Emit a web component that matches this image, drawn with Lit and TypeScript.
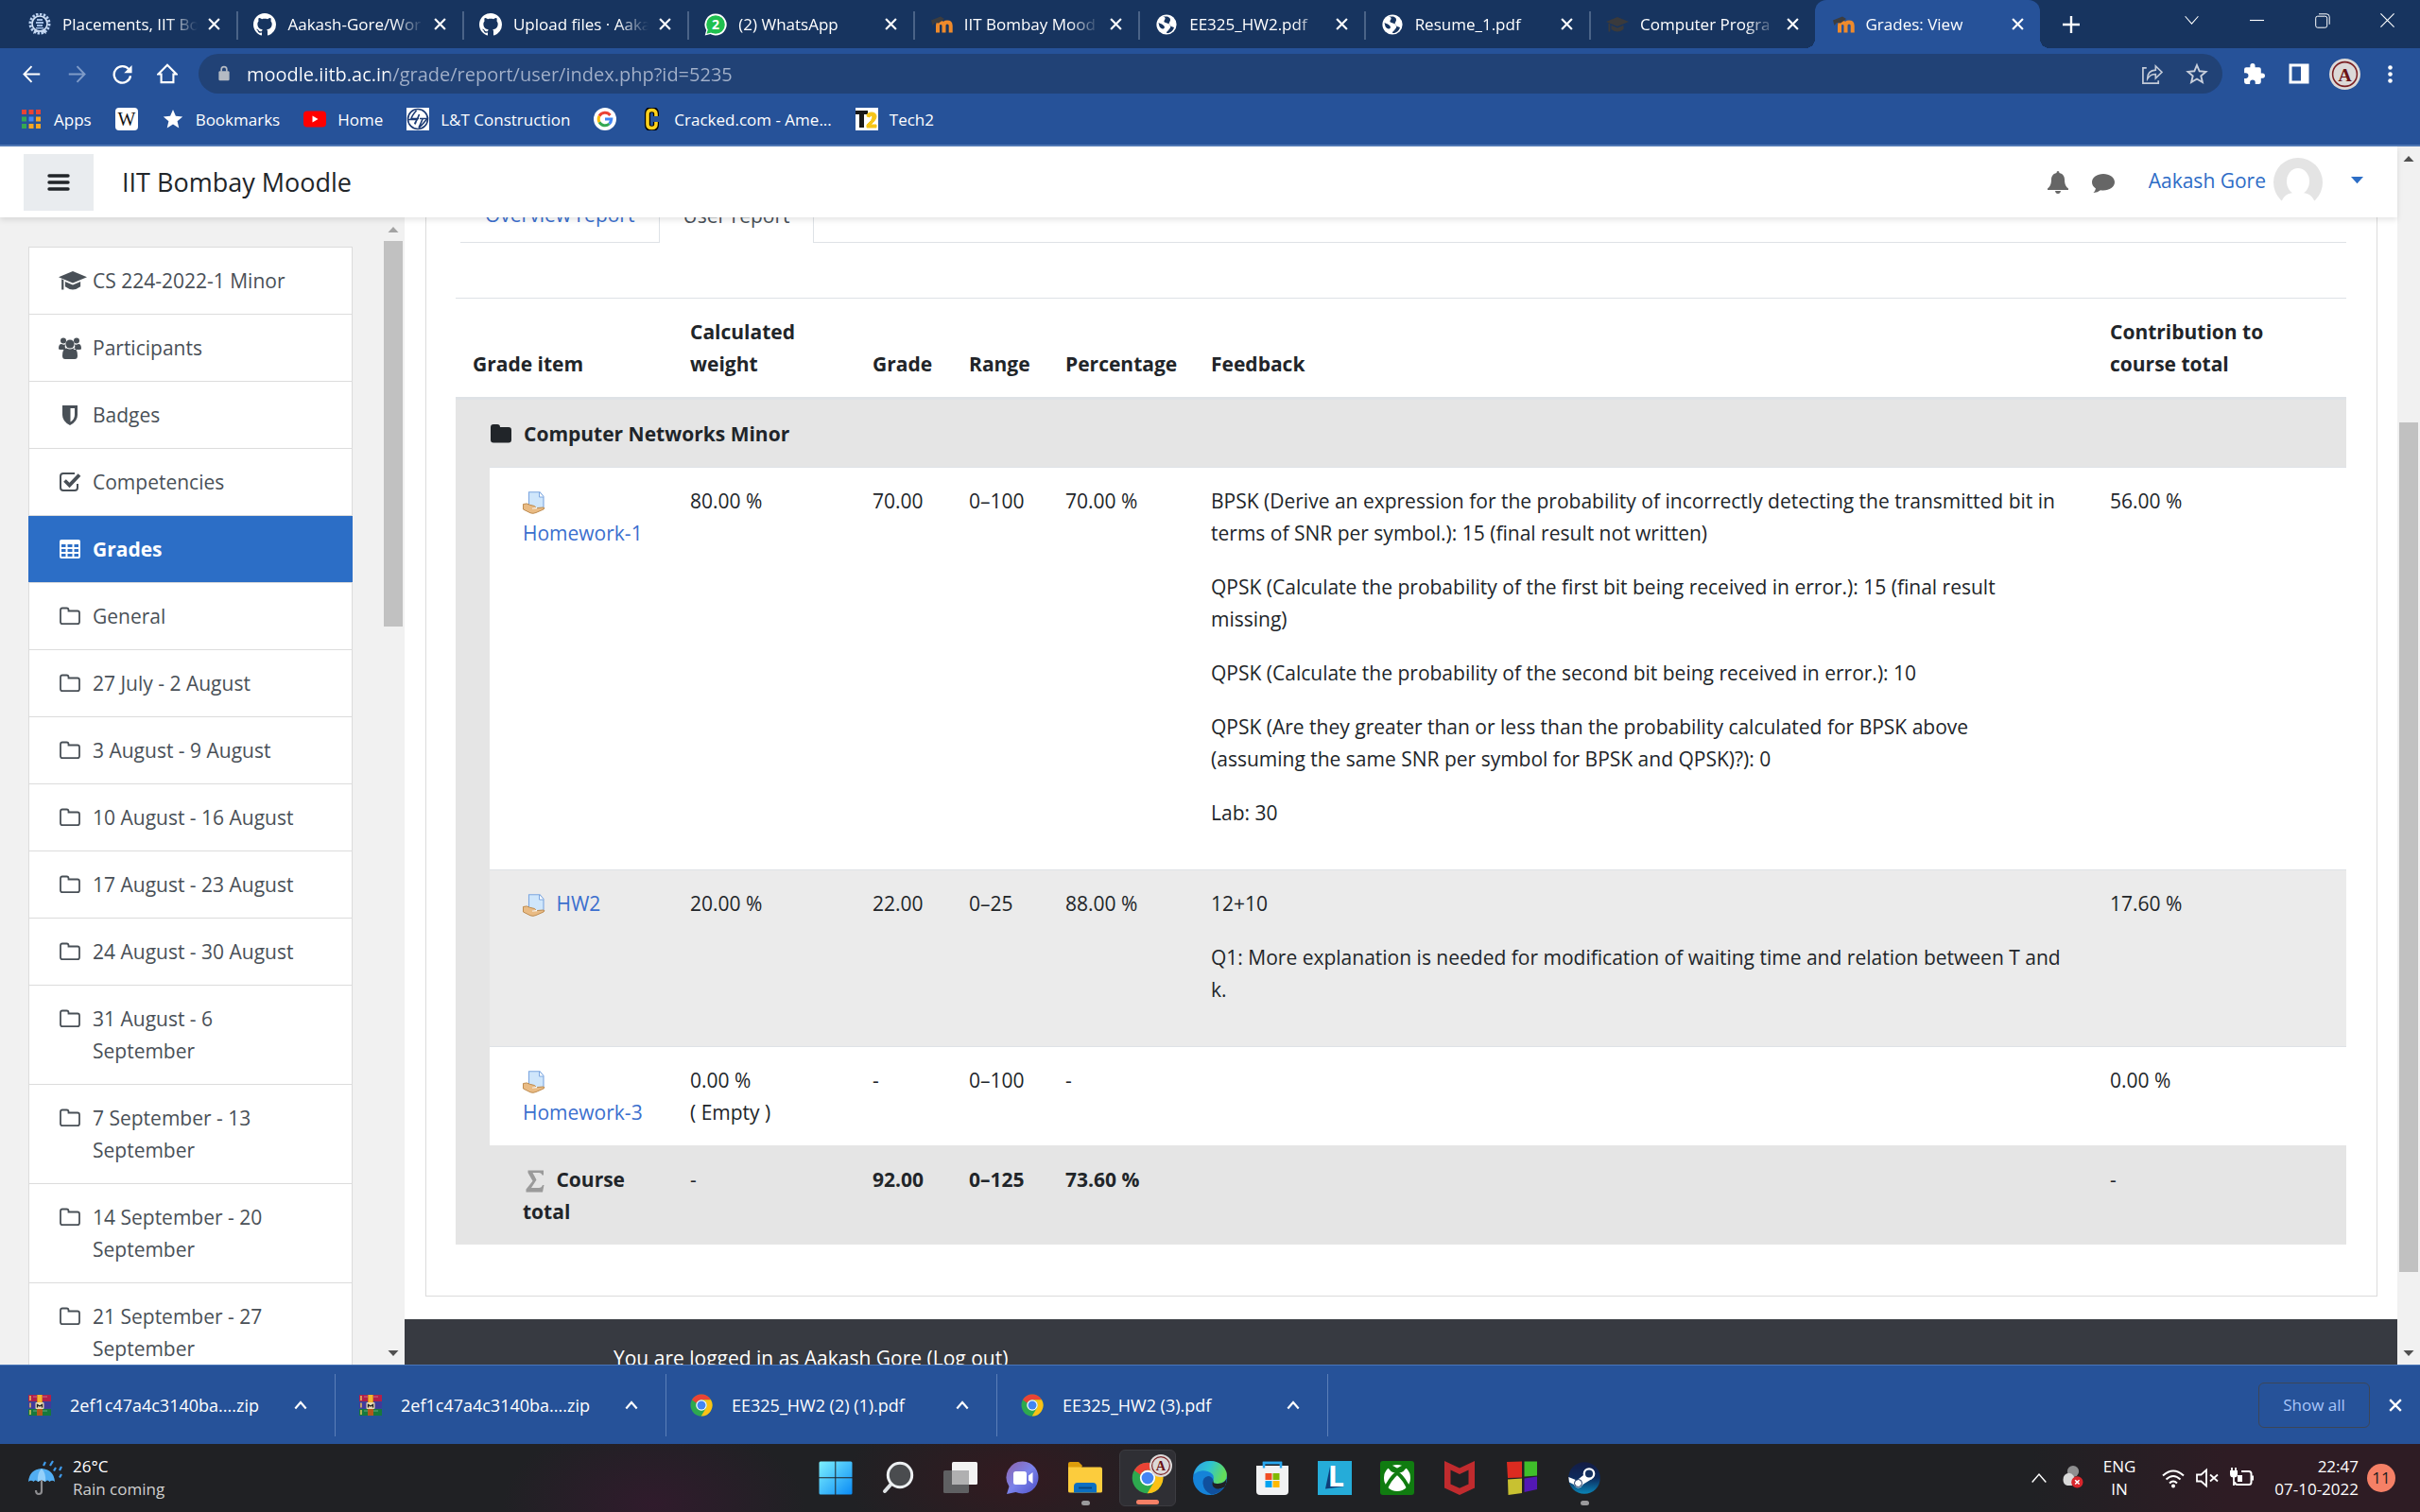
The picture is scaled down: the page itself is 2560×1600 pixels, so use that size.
import { LitElement, html, css, svg, nothing, TemplateResult } from "lit";
import { customElement, property } from "lit/decorators.js";
import { classMap } from "lit/directives/class-map.js";
import { styleMap } from "lit/directives/style-map.js";

type Icon = TemplateResult;

const icon = (box: string, body: unknown, size = 24): Icon =>
  html`<svg viewBox=${box} width=${size} height=${size} aria-hidden="true">${body}</svg>`;

/* ---------- browser icons ---------- */

const closeIcon = (size = 13, w = 2) =>
  icon("0 0 12 12", svg`<path d="M1 1L11 11M11 1L1 11" stroke="currentColor" stroke-width=${w} fill="none"/>`, size);

const seal = icon(
  "0 0 24 24",
  svg`<circle cx="12" cy="11" r="10" fill="none" stroke="#b9d0f0" stroke-width="3" stroke-dasharray="2.4 1.5"/>
  <circle cx="12" cy="11" r="8" fill="none" stroke="#d5e4f8" stroke-width="1.6"/>
  <path d="M9 6h6v2H9zM8 9h8v2H8zM9 12h6v2H9zM8 15h8v1.500H8z" fill="#9fbbe2"/>
  <path d="M5 22q7-5 14 0l-1.500-4h-11z" fill="#c8daf3"/>`
);
const github = icon(
  "0 0 16 16",
  svg`<path fill="#fff" d="M8 0C3.58 0 0 3.58 0 8c0 3.54 2.29 6.53 5.47 7.59.4.07.55-.17.55-.38 0-.19-.01-.82-.01-1.49-2.01.37-2.53-.49-2.69-.94-.09-.23-.48-.94-.82-1.13-.28-.15-.68-.52-.01-.53.63-.01 1.08.58 1.23.82.72 1.21 1.87.87 2.33.66.07-.52.28-.87.51-1.07-1.78-.2-3.64-.89-3.64-3.95 0-.87.31-1.59.82-2.15-.08-.2-.36-1.02.08-2.12 0 0 .67-.21 2.2.82.64-.18 1.32-.27 2-.27s1.36.09 2 .27c1.53-1.04 2.2-.82 2.2-.82.44 1.1.16 1.92.08 2.12.51.56.82 1.27.82 2.15 0 3.07-1.87 3.75-3.65 3.95.29.25.54.73.54 1.48 0 1.07-.01 1.93-.01 2.2 0 .21.15.46.55.38A8.01 8.01 0 0 0 16 8c0-4.42-3.58-8-8-8z"/>`
);
const whatsapp = icon(
  "0 0 24 24",
  svg`<path d="M12 .5A11.500 11.500 0 1 1 6.500 22L.7 23.500 2.200 18A11.500 11.500 0 0 1 12 .5z" fill="#fff"/>
  <circle cx="12" cy="12" r="9.800" fill="#1fc04f"/><path d="M2.500 21.800l1.500-5 3.400 3.600z" fill="#1fc04f"/>
  <text x="12" y="17" font-size="14" font-weight="700" text-anchor="middle" fill="#fff">2</text>`
);
const moodleM = icon(
  "0 0 24 24",
  svg`<path d="M8 20.500V13q0-3 3-3t3.500 3v7.500M14.500 20.500V13q0-3.500 3.500-3.500t3.700 3.500v7.500" fill="none" stroke="#ef8a2b" stroke-width="4"/>
  <path d="M1 7.500L11 3.500l4 2.500-6 4.500-4-.5-2.500 3z" fill="#3d3d3f"/>`
);
const globe = icon(
  "0 0 24 24",
  svg`<circle cx="12" cy="12" r="10.600" fill="#fff"/>
  <path d="M8 3.500c3 .5 3 2 2 3.500s-1 2.500 1 3 4 1 5 3-1 3.500-2 5-2 1-2 3c3 .5 7-2 8-6-2-1-4-1-5-3s1-3 1-5-1-2.500-3-3.500zM3.500 10c2 1 4 1.500 5.500 3s1 3-.5 3.500-3-1-4-2.500z" fill="#17345f"/>`
);
const gradCap = (color: string, size = 24) =>
  icon(
    "0 0 24 24",
    svg`<path d="M12 4L0 9l12 5 12-5z" fill=${color}/><path d="M5.500 12.800V17q6.500 5 13 0v-4.200L12 15.600z" fill=${color}/><path d="M2.500 10.500v9h1.800v-8.200z" fill=${color}/>`,
    size
  );
const back = icon("0 0 24 24", svg`<path d="M22 12H3M12 2.500L2.800 12l9.200 9.500" fill="none" stroke="#fff" stroke-width="2.200"/>`, 21);
const forward = icon("0 0 24 24", svg`<path d="M2 12h19M12 2.500l9.200 9.500-9.200 9.500" fill="none" stroke="#7f9bc8" stroke-width="2.200"/>`, 21);
const reload = icon("0 0 24 24", svg`<path d="M20 6.500A10 10 0 1 0 21.800 14" fill="none" stroke="#fff" stroke-width="2.600"/><path d="M23.500 1v9.500H14z" fill="#fff"/>`, 21);
const home = icon("0 0 24 24", svg`<path d="M1.500 12.500L12 2l10.500 10.500H19V22H5v-9.500z" fill="none" stroke="#fff" stroke-width="2.300"/>`, 22);
const lock = icon("0 0 24 32", svg`<rect x="2" y="11" width="20" height="18" rx="2.500" fill="#b4bac3"/><path d="M7 12V8a5 5 0 0 1 10 0v4" fill="none" stroke="#b4bac3" stroke-width="3"/>`, 18);
const share = icon(
  "0 0 24 24",
  svg`<path d="M6 5H2v17h17v-3" fill="none" stroke="#c3cbd8" stroke-width="1.800"/><path d="M7 17q0-9 9-9.500V3l7 6.800-7 6.700V12Q10 12 7 17z" fill="none" stroke="#c3cbd8" stroke-width="1.700"/>`,
  23
);
const starOutline = icon("0 0 24 24", svg`<path d="M12 3l2.700 6.300 6.800.6-5.200 4.500 1.600 6.700L12 17.500l-5.900 3.600 1.600-6.700L2.500 9.900l6.800-.6z" fill="none" stroke="#c9d0dc" stroke-width="1.900"/>`, 24);
const puzzle = icon(
  "0 0 24 24",
  svg`<path d="M20.500 11H19V7a2 2 0 0 0-2-2h-4V3.500a2.500 2.500 0 0 0-5 0V5H4a2 2 0 0 0-2 2v3.800h1.500a2.700 2.700 0 0 1 0 5.400H2V20a2 2 0 0 0 2 2h3.800v-1.500a2.700 2.700 0 0 1 5.400 0V22H17a2 2 0 0 0 2-2v-4h1.500a2.500 2.500 0 0 0 0-5z" fill="#fff"/>`,
  25
);
const sidePanel = icon("0 0 24 24", svg`<rect x="3" y="3" width="18" height="18" fill="none" stroke="#fff" stroke-width="3"/><path d="M14 3h7v18h-7z" fill="#fff"/>`, 24);
const profile = (size: number) =>
  icon(
    "0 0 32 32",
    svg`<circle cx="16" cy="16" r="16" fill="#dcd9d8"/><circle cx="16" cy="16" r="12.500" fill="none" stroke="#7a1f22" stroke-width="1.500"/>
    <text x="16" y="23" font-size="19" font-weight="700" font-family="Liberation Serif, serif" text-anchor="middle" fill="#6b1216">A</text>`,
    size
  );
const dots = icon("0 0 24 24", svg`<circle cx="12" cy="4" r="2.600" fill="#fff"/><circle cx="12" cy="12" r="2.600" fill="#fff"/><circle cx="12" cy="20" r="2.600" fill="#fff"/>`, 21);
const chevron = (dir: "up" | "down", size: number, w = 2) =>
  icon("0 0 16 16", svg`<path d=${dir === "up" ? "M1.500 12L8 4.500 14.500 12" : "M1.500 4L8 11.500 14.500 4"} fill="none" stroke="currentColor" stroke-width=${w}/>`, size);

const gridColors = ["#ea4335", "#ea4335", "#ea4335", "#34a853", "#4285f4", "#f5a623", "#34a853", "#f5a623", "#f5a623"];
const appsGrid = icon("0 0 24 24", gridColors.map((c, i) => svg`<rect x=${2 + (i % 3) * 7.5} y=${2 + Math.floor(i / 3) * 7.5} width="5" height="5" fill=${c}/>`));
const wiki = icon("0 0 24 24", svg`<rect width="24" height="24" rx="4" fill="#fff"/><text x="12" y="18.500" font-size="20" font-family="Liberation Serif, serif" text-anchor="middle" fill="#111">W</text>`);
const starSolid = icon("0 0 24 24", svg`<path d="M12 2l2.900 6.800 7.300.6-5.600 4.800 1.700 7.200L12 17.600l-6.300 3.800 1.700-7.200L1.800 9.400l7.300-.6z" fill="#fff"/>`);
const youtube = icon("0 0 24 24", svg`<rect y="3.500" width="24" height="17" rx="4" fill="#f00"/><path d="M9.500 8.500v7l6-3.500z" fill="#fff"/>`);
const lnt = icon(
  "0 0 24 24",
  svg`<rect width="24" height="24" fill="#fff"/><circle cx="12" cy="12" r="10.500" fill="none" stroke="#1d3b74" stroke-width="1.600"/>
  <path d="M10.500 3Q6 8 5 11.500h8M2 12.500h9l-2 5M13.500 7q-2 6-5 10M14 11.500h8q-4 5-9 10M17 12q-2 5-4 9" fill="none" stroke="#1d3b74" stroke-width="1.600"/>`
);
const google = icon(
  "0 0 24 24",
  svg`<circle cx="12" cy="12" r="12" fill="#fff"/>
  <path d="M17.500 8A6.800 6.800 0 0 0 6 8.800" fill="none" stroke="#ea4335" stroke-width="3"/>
  <path d="M6 8.800a6.800 6.800 0 0 0 0 6.500" fill="none" stroke="#fbbc05" stroke-width="3"/>
  <path d="M6 15.300a6.800 6.800 0 0 0 10.500 1.700" fill="none" stroke="#34a853" stroke-width="3"/>
  <path d="M12 12h6.800q-.3 3.300-2.300 5" fill="none" stroke="#4285f4" stroke-width="3"/>`
);
const cracked = icon(
  "0 0 24 24",
  svg`<path d="M17 9V6.500Q17 2 12.500 2T8 6.500v11Q8 22 12.500 22T17 17.500V15" fill="none" stroke="#000" stroke-width="6"/>
  <path d="M17 9V6.500Q17 2.500 12.500 2.500T8 6.500v11q0 4 4.500 4t4.500-4V15" fill="none" stroke="#ffd21c" stroke-width="3.600"/>`
);
const tech2 = icon(
  "0 0 24 24",
  svg`<rect width="24" height="24" fill="#fff"/><path d="M0 3h13v4H9v14H4V7H0z" fill="#191919"/>
  <path d="M12 9q0-4 5-4t5 4.500q0 3-6 8.500h6v3H12v-3q6-5 6-8 0-1.500-1.500-1.500T15 10z" fill="#f5c518" stroke="#f5c518"/>`
);

/* ---------- site icons ---------- */

const bars = icon("0 0 24 24", svg`<path d="M2 5h20M2 12h20M2 19h20" stroke="#212529" stroke-width="3.400" stroke-linecap="round"/>`);
const bell = icon("0 0 24 24", svg`<path d="M12 0q1.500 0 1.500 2c4 1 5.500 4 5.500 7 0 5 1.500 7.500 4 9.500v1.500H1v-1.500c2.500-2 4-4.500 4-9.500 0-3 1.500-6 5.500-7Q10.500 0 12 0zM9 21h6q-.5 3-3 3t-3-3z" fill="#666"/>`);
const comment = icon("0 0 24 24", svg`<path d="M12 3c6.500 0 12 3.800 12 8.800s-5.500 8.700-12 8.700q-1.500 0-3-.3-3 2.600-7.500 2.800 2-2 2.500-4.500-4-2.700-4-6.700C0 6.800 5.500 3 12 3z" fill="#666"/>`);
const avatar = icon(
  "0 0 52 52",
  svg`<circle cx="26" cy="26" r="26" fill="#e4e4e4"/><ellipse cx="26" cy="25" rx="12" ry="14" fill="#fff"/><path d="M7 52q2-14 14-15h10q12 1 14 15z" fill="#fff"/>`,
  52
);
const caret = icon("0 0 12 12", svg`<path d="M0 1h12L6 7.500z" fill="#2c6ec6"/>`, 13);
const users = icon(
  "0 0 24 24",
  svg`<g fill="#495057"><circle cx="5" cy="4.500" r="3"/><circle cx="19" cy="4.500" r="3"/><circle cx="12" cy="8" r="4.600"/>
  <path d="M0 13q0-5 3-5 2 1 4 .5-1 4 1.500 5.500H2q-2 0-2-1zM24 13q0-5-3-5-2 1-4 .5 1 4-1.500 5.500H22q2 0 2-1zM4 20.500q0-8 4.500-8 3.500 2 7 0 4.500 0 4.500 8 0 3.500-3 3.500H7q-3 0-3-3.500z"/></g>`
);
const shield = icon("0 0 24 24", svg`<path d="M4 2h16v10q0 7-8 11-8-4-8-11zM12.500 5v14.500q4.500-3 4.500-7.500V5z" fill="#495057" fill-rule="evenodd"/>`);
const checkSquare = icon("0 0 24 24", svg`<path d="M17 3H5a3 3 0 0 0-3 3v12a3 3 0 0 0 3 3h12a3 3 0 0 0 3-3v-4" fill="none" stroke="#495057" stroke-width="2"/><path d="M6.500 10.500L11.500 15.500 22 4.500" fill="none" stroke="#495057" stroke-width="3.800"/>`);
const tableIcon = icon("0 0 24 24", svg`<path fill-rule="evenodd" fill="#fff" d="M3 2h18q2 0 2 2v16q0 2-2 2H3q-2 0-2-2V4q0-2 2-2zM3 7v3h4.500V7zM9.500 7v3h5V7zM16.500 7v3H21V7zM3 12v3h4.500v-3zM9.500 12v3h5v-3zM16.500 12v3H21v-3zM3 17v3h4.500v-3zM9.500 17v3h5v-3zM16.500 17v3H21v-3z"/>`);
const folderOutline = icon("0 0 24 24", svg`<path d="M2 18V5.500Q2 3.500 4 3.500h4.500q2 0 2 2V6.500H20q2 0 2 2V18q0 2.200-2 2.200H4Q2 20.200 2 18z" fill="none" stroke="#495057" stroke-width="1.800"/>`);
const folderSolid = icon("0 0 24 24", svg`<path d="M1 18.500V5q0-3 3-3h4q3 0 3 3h9q3 0 3 3v10.500q0 3-3 3H4q-3 0-3-3z" fill="#212529"/>`);
const assignment = icon(
  "0 0 24 24",
  svg`<path d="M6.500.8H18l4 4.700V18H6.500z" fill="#cfe6fb" stroke="#7da7e0" stroke-width="1.100"/><path d="M17.500 1v5H22" fill="#fff" stroke="#7da7e0"/>
  <path d="M.5 13.500q4-1.500 7 .8l5 1.200q2 .8 0 2h-2 5l6-.5q2.500.3.500 2L14 22.500q-3 1.500-6 .3L.5 19z" fill="#e9bb84" stroke="#b98546" stroke-width=".9"/><path d="M10 18l5-.3" stroke="#fff" stroke-width="1.200"/>`
);
const sigma = icon("0 0 24 24", svg`<path d="M5.500.5H22v5h-1.500Q20 3 17 3h-6.500l4 7.500L9 19h8q3 0 4-3h1.500L21 23.500H3.500v-3l7-8.700L5.500 3z" fill="#9a9a9a"/>`);

/* ---------- desktop icons ---------- */

const chrome = (size: number) =>
  icon(
    "0 0 48 48",
    svg`<circle cx="24" cy="24" r="23" fill="#2da94f"/>
    <path d="M24 1a23 23 0 0 1 20 11.500H24a11.500 11.500 0 0 0-10.500 7L4 12.500A23 23 0 0 1 24 1z" fill="#ea4335"/>
    <path d="M44 12.500A23 23 0 0 1 23.500 47l10.500-17.500a11.500 11.500 0 0 0-10-17z" fill="#fbc116"/>
    <circle cx="24" cy="24" r="11.500" fill="#fff"/><circle cx="24" cy="24" r="9" fill="#4285f4"/>`,
    size
  );
const winrar = icon(
  "0 0 24 24",
  svg`<rect y="1" width="24" height="7" fill="#b0204a"/><rect y="8.500" width="24" height="7" fill="#413a9b"/><rect y="16" width="24" height="7" fill="#17783c"/>
  <path d="M2 2v5M2 9.500v5M2 17v5" stroke="#e9c25b" stroke-width="1.500"/><path d="M5 3h15M5 18h15" stroke="#fff" stroke-opacity=".35"/>
  <rect x="9" y="1" width="6" height="22" fill="#b5561c"/><rect x="9.500" y="1" width="5" height="8" fill="#f4b52c"/><rect x="7.500" y="9" width="9" height="7" rx="1" fill="#e8d9b5"/><path d="M9.500 14.500v-3l2.500 1.500 2.500-1.500v3" fill="none" stroke="#222" stroke-width="1.400"/>`
);
const umbrella = icon(
  "0 0 38 38",
  svg`<path d="M1 23Q2 10 15 9q13 1 14 14-3-2.500-5.500 0-2.500-3-4.500 0-4-3-8 0-2.500-3-4.500 0Q4 20.500 1 23z" fill="#52aef2"/>
  <path d="M15 9q-5 5-4 14 4-3 8 0 1-9-4-14z" fill="#93d0fa"/><path d="M15 21v12q0 3-3 3t-3-4" fill="none" stroke="#8d8d90" stroke-width="2.200"/>
  <path d="M19 2l-2 4M27 1l-3 5M30 8l-2 3.500M36 7l-2 4M36 15l-2 3.500" stroke="#3f9bea" stroke-width="2.200"/>`,
  38
);
const windows = icon(
  "0 0 36 36",
  svg`<defs><linearGradient id="w" x1="0" y1="0" x2="1" y2="1"><stop offset="0" stop-color="#7df1ff"/><stop offset="1" stop-color="#0a8bf5"/></linearGradient></defs>
  <path d="M2 .5h15.300v16.800H.5V2Q.5.500 2 .5zM18.300.5H34Q35.500.5 35.500 2v15.300H18.300zM.5 18.300h16.800v17.200H2Q.5 35.500.5 34zM18.300 18.300h17.200V34q0 1.500-1.500 1.500H18.300z" fill="url(#w)"/>`,
  36
);
const search = icon("0 0 36 36", svg`<path d="M12 23L4 32" stroke="#dfe3e6" stroke-width="4" stroke-linecap="round"/><circle cx="20" cy="15" r="12.700" fill="#4a4c4f" stroke="#edf0f2" stroke-width="3"/>`, 36);
const taskView = icon("0 0 36 36", svg`<rect x="0" y="10" width="27" height="24" rx="1.500" fill="#5f6062"/><rect x="9" y="1" width="27" height="24" rx="1.500" fill="#f3f3f3"/><path d="M9 10h18v15H10.500Q9 25 9 23.500z" fill="#b0b0b1"/>`, 36);
const chat = icon(
  "0 0 36 36",
  svg`<defs><linearGradient id="c" x1="0" y1="0" x2="1" y2="1"><stop offset="0" stop-color="#8f62a8"/><stop offset=".5" stop-color="#7b83eb"/><stop offset="1" stop-color="#4d4fc7"/></linearGradient></defs>
  <path d="M18 .5a17 17 0 1 1-7.500 32.500L1 35l2.500-8A17 17 0 0 1 18 .5z" fill="url(#c)"/><rect x="8" y="11" width="14" height="14" rx="2.500" fill="#fff"/><path d="M24 15.500l4.500-3.500v12L24 20.500z" fill="#fff"/>`,
  36
);
const explorer = icon("0 0 36 36", svg`<path d="M0 3q0-2 2-2h9l4 4-2 4H0z" fill="#dd9d0c"/><path d="M0 6.500h34q2 0 2 2V32q0 1.500-2 1.500H2Q0 33.500 0 32z" fill="#fccc3d"/><path d="M6 33.500V27q0-4 4-4h16q4 0 4 4v6.500z" fill="#0b6fc2"/><path d="M11 28.500h14" stroke="#07447d" stroke-width="1.800"/>`, 36);
const edge = icon(
  "0 0 36 36",
  svg`<defs><linearGradient id="e" x1="0" y1="0" x2="1" y2=".3"><stop offset="0" stop-color="#2f9fe4"/><stop offset=".5" stop-color="#2fc3d2"/><stop offset="1" stop-color="#63dc5a"/></linearGradient></defs>
  <circle cx="18" cy="18" r="18" fill="#1583d8"/>
  <path d="M1 14A17.500 17.500 0 0 1 18 0q13 0 17.500 12 2 11-9 12-6 .3-5-3.500 2-7-6-9.500T1 14z" fill="url(#e)"/>
  <path d="M21.500 20.500Q20 16 16 16q-6 1-5.500 8 1 8 9 11.500A18 18 0 0 0 33 28q-5 3-10 .5-4-2.500-1.500-8z" fill="#10509d"/>
  <path d="M21.500 20.500q-1 4 5 3.500 7-.5 9-5.500.5 4-2 9-7 4-11.500.5-3-3.500-.5-7.500z" fill="#202124"/>`,
  36
);
const store = icon("0 0 36 36", svg`<path d="M9 7V2h18v5" fill="none" stroke="#29a8ef" stroke-width="2.400"/><path d="M1 5h34v27q0 4-4 4H5q-4 0-4-4z" fill="#f1f2f3"/><path d="M9 7.500V2h18v5.500" fill="none" stroke="#29a8ef" stroke-width="2.400"/><path d="M10.500 13h7v7h-7z" fill="#f04e24"/><path d="M18.500 13h7v7h-7z" fill="#80b900"/><path d="M10.500 21h7v7h-7z" fill="#00a3f0"/><path d="M18.500 21h7v7h-7z" fill="#ffb900"/>`, 36);
const lens = icon("0 0 36 36", svg`<rect width="36" height="36" fill="#25acd9"/><path d="M13 6L8 29.500l20-2.500H13z" fill="#0f3e78"/><text x="11" y="27" font-size="30" font-weight="700" fill="#fff">L</text>`, 36);
const xbox = icon("0 0 36 36", svg`<rect width="36" height="36" rx="3" fill="#107c10"/><circle cx="18" cy="18" r="14" fill="#fff"/><path d="M5 31Q10 19 18 12.500 26 19 31 31M8 5.500Q13 6.500 18 10q5-3.500 10-4.500" fill="none" stroke="#107c10" stroke-width="4"/><path d="M18 9.500Q14 13 10 7M18 9.500Q22 13 26 7" fill="none" stroke="#107c10" stroke-width="3"/>`, 36);
const mcafee = icon("0 0 36 36", svg`<path d="M2 0l16 7.500L34 0v28.500L18 36 2 28.500z" fill="#c02b2e"/><path d="M8.500 9.500L18 14l9.500-4.500v15L18 28.800l-9.500-4.300z" fill="#202124"/>`, 36);
const cubes = icon("0 0 36 36", svg`<path d="M2 1l16-.5v17L3 18z" fill="#dc2b20"/><path d="M20.500.5H34v15l-13.500 1z" fill="#3fbf2a"/><path d="M3 19.500l15-1V34L3.500 36z" fill="#c8c131"/><path d="M20.500 18.500L34 16.500V30l-13.500 3z" fill="#5318b4"/>`, 36);
const steam = icon(
  "0 0 36 36",
  svg`<defs><linearGradient id="s" x1="0" y1="0" x2="0" y2="1"><stop offset="0" stop-color="#141c44"/><stop offset=".5" stop-color="#0d2a5c"/><stop offset="1" stop-color="#0a86b8"/></linearGradient></defs>
  <circle cx="18" cy="18" r="16.800" fill="url(#s)"/><path d="M1.300 17l8.700 3.500 9-7L26 19l-9 5.500-3 3.500q-5 1.500-7-3L2 22.500z" fill="#fff"/><circle cx="23" cy="13.500" r="5.200" fill="#14305f" stroke="#fff" stroke-width="2.300"/><circle cx="11.500" cy="23.500" r="4" fill="none" stroke="#14305f" stroke-width="1"/>`,
  36
);
const cloudError = icon("0 0 26 32", svg`<circle cx="13" cy="8" r="7" fill="#8f8f90"/><path d="M1 18q0-7 7-8 7 1 7 9l-3 6H6q-5-1-5-7z" fill="#d9d9d9"/><circle cx="18" cy="21" r="7" fill="#d9262c"/><path d="M15.500 18.500l5 5M20.500 18.500l-5 5" stroke="#fff" stroke-width="1.800"/>`, 28);
const wifi = icon("0 0 26 26", svg`<path d="M2 10.500q11-10 22 0M5.500 14.500q7.500-7 15 0M9 18.500q4-4 8 0" fill="none" stroke="#fff" stroke-width="2"/><circle cx="13" cy="21.500" r="2" fill="#fff"/>`, 26);
const muted = icon("0 0 26 26", svg`<path d="M2 9.500v7h4.500L12 21.500v-17L6.500 9.500zM16 9.500l8 7M24 9.500l-8 7" fill="none" stroke="#fff" stroke-width="1.800"/>`, 26);
const battery = icon("0 0 26 26", svg`<path d="M13 6h8q2.500 0 2.500 2.500v9Q23.500 20 21 20H9q-3 0-3-3" fill="none" stroke="#fff" stroke-width="2"/><path d="M24 10.500h2v5h-2zM9 10h5v7H9zM1 5h8v4q0 3.500-4 3.500T1 9z" fill="#fff"/><path d="M3 2v4M7 2v4M5 12v9" stroke="#fff" stroke-width="1.800"/>`, 26);

/* ---------- data ---------- */

const tabs: { icon: Icon; title: string; active?: boolean }[] = [
  { icon: seal, title: "Placements, IIT Bo" },
  { icon: github, title: "Aakash-Gore/Wor" },
  { icon: github, title: "Upload files · Aaka" },
  { icon: whatsapp, title: "(2) WhatsApp" },
  { icon: moodleM, title: "IIT Bombay Mood" },
  { icon: globe, title: "EE325_HW2.pdf" },
  { icon: globe, title: "Resume_1.pdf" },
  { icon: gradCap("#3a3a3c"), title: "Computer Progra" },
  { icon: moodleM, title: "Grades: View", active: true },
];

const bookmarks: { icon: Icon; label: string; name?: string }[] = [
  { icon: appsGrid, label: "Apps" },
  { icon: wiki, label: "", name: "Wikipedia" },
  { icon: starSolid, label: "Bookmarks" },
  { icon: youtube, label: "Home" },
  { icon: lnt, label: "L&T Construction" },
  { icon: google, label: "", name: "Google" },
  { icon: cracked, label: "Cracked.com - Ame..." },
  { icon: tech2, label: "Tech2" },
];

const sections: { icon: Icon; label: string; active?: boolean }[] = [
  { icon: gradCap("#495057", 30), label: "CS 224-2022-1 Minor" },
  { icon: users, label: "Participants" },
  { icon: shield, label: "Badges" },
  { icon: checkSquare, label: "Competencies" },
  { icon: tableIcon, label: "Grades", active: true },
  ...[
    "General",
    "27 July - 2 August",
    "3 August - 9 August",
    "10 August - 16 August",
    "17 August - 23 August",
    "24 August - 30 August",
    "31 August - 6 September",
    "7 September - 13 September",
    "14 September - 20 September",
    "21 September - 27 September",
  ].map((label) => ({ icon: folderOutline, label })),
];

interface GradeRow {
  item: string;
  weight: string[];
  grade: string;
  range: string;
  percentage: string;
  feedback: string[];
  contribution: string;
  shaded?: boolean;
}

const grades: GradeRow[] = [
  {
    item: "Homework-1",
    weight: ["80.00 %"],
    grade: "70.00",
    range: "0–100",
    percentage: "70.00 %",
    feedback: [
      "BPSK (Derive an expression for the probability of incorrectly detecting the transmitted bit in terms of SNR per symbol.): 15 (final result not written)",
      "QPSK (Calculate the probability of the first bit being received in error.): 15 (final result missing)",
      "QPSK (Calculate the probability of the second bit being received in error.): 10",
      "QPSK (Are they greater than or less than the probability calculated for BPSK above (assuming the same SNR per symbol for BPSK and QPSK)?): 0",
      "Lab: 30",
    ],
    contribution: "56.00 %",
  },
  {
    item: "HW2",
    weight: ["20.00 %"],
    grade: "22.00",
    range: "0–25",
    percentage: "88.00 %",
    feedback: ["12+10", "Q1: More explanation is needed for modification of waiting time and relation between T and k."],
    contribution: "17.60 %",
    shaded: true,
  },
  {
    item: "Homework-3",
    weight: ["0.00 %", "( Empty )"],
    grade: "-",
    range: "0–100",
    percentage: "-",
    feedback: [],
    contribution: "0.00 %",
  },
];

const downloads: { icon: Icon; name: string }[] = [
  { icon: winrar, name: "2ef1c47a4c3140ba....zip" },
  { icon: winrar, name: "2ef1c47a4c3140ba....zip" },
  { icon: chrome(24), name: "EE325_HW2 (2) (1).pdf" },
  { icon: chrome(24), name: "EE325_HW2 (3).pdf" },
];

const apps: { icon: Icon; name: string; running?: boolean; current?: boolean }[] = [
  { icon: windows, name: "Start" },
  { icon: search, name: "Search" },
  { icon: taskView, name: "Task view" },
  { icon: chat, name: "Chat" },
  { icon: explorer, name: "File Explorer", running: true },
  { icon: chrome(34), name: "Chrome", current: true },
  { icon: edge, name: "Edge" },
  { icon: store, name: "Store" },
  { icon: lens, name: "Lenovo" },
  { icon: xbox, name: "Xbox" },
  { icon: mcafee, name: "McAfee" },
  { icon: cubes, name: "Cubes" },
  { icon: steam, name: "Steam", running: true },
];

const reset = css`
  * {
    box-sizing: border-box;
  }
  svg {
    display: block;
    flex: none;
  }
  button {
    font: inherit;
    color: inherit;
    background: none;
    border: 0;
    padding: 0;
    display: flex;
    align-items: center;
    justify-content: center;
  }
  a {
    color: inherit;
    text-decoration: none;
  }
`;

/* ---------- elements ---------- */

@customElement("scroll-rail")
class ScrollRail extends LitElement {
  @property({ type: Number }) before = 0;
  @property({ type: Number }) thumb = 1;
  @property({ type: Number }) after = 0;
  @property({ type: Boolean }) top = false;

  static styles = css`
    :host {
      display: flex;
      flex-direction: column;
      align-items: center;
      background: #f1f1f1;
      width: 24px;
      flex: none;
    }
    .arrow {
      height: 25px;
      display: flex;
      align-items: center;
      color: #505050;
      flex: none;
    }
    .dim {
      color: #a3a3a3;
    }
    .thumb {
      width: 20px;
      background: #c1c1c1;
    }
  `;

  render() {
    return html`
      <div class=${classMap({ arrow: true, dim: this.top })}>${icon("0 0 12 12", svg`<path d="M6 3L11.500 9H.5z" fill="currentColor"/>`, 12)}</div>
      <div style=${styleMap({ flex: `${this.before} 0 0` })}></div>
      <div class="thumb" style=${styleMap({ flex: `${this.thumb} 0 0` })}></div>
      <div style=${styleMap({ flex: `${this.after} 0 0` })}></div>
      <div class="arrow">${icon("0 0 12 12", svg`<path d="M6 9L.5 3h11z" fill="currentColor"/>`, 12)}</div>
    `;
  }
}

@customElement("browser-chrome")
class BrowserChrome extends LitElement {
  static styles = [
    reset,
    css`
      :host {
        display: block;
        background: #265299;
        color: #fff;
        font-size: 17px;
        border-bottom: 2px solid #5078b5;
      }
      .strip {
        display: flex;
        height: 51px;
        background: #17345f;
        padding-left: 12px;
      }
      .tabs {
        flex: 1;
        display: flex;
        min-width: 0;
      }
      .tab {
        flex: 1 1 0;
        min-width: 0;
        display: flex;
        align-items: center;
        padding: 0 16px 0 18px;
        gap: 12px;
        position: relative;
      }
      .tab:not(.active)::after {
        content: "";
        position: absolute;
        right: -2px;
        top: 12px;
        width: 2px;
        height: 30px;
        background: #4a6387;
      }
      .tab:nth-last-child(2)::after {
        display: none;
      }
      .title {
        flex: 1;
        min-width: 0;
        white-space: nowrap;
        justify-content: flex-start;
        height: 30px;
        mask-image: linear-gradient(to right, #000 calc(100% - 32px), transparent);
      }
      .close {
        width: 15px;
        height: 24px;
        margin: 0 0 0 -2px;
      }
      .active {
        background: #265299;
        border-radius: 12px 12px 0 0;
      }
      .active::before,
      .active::after {
        content: "";
        position: absolute;
        bottom: 0;
        width: 10px;
        height: 10px;
      }
      .active::before {
        right: 100%;
        background: radial-gradient(circle at 0 0, transparent 10px, #265299 10px);
      }
      .active::after {
        left: 100%;
        background: radial-gradient(circle at 100% 0, transparent 10px, #265299 10px);
      }
      .new {
        width: 66px;
      }
      .window {
        display: flex;
        margin-left: 60px;
      }
      .window button {
        width: 69px;
        height: 43px;
      }
      .bar {
        display: flex;
        align-items: center;
        gap: 9px;
        padding: 6px 8px 6px 9px;
      }
      .group {
        display: flex;
      }
      .tool {
        width: 48px;
        height: 42px;
      }
      .omnibox {
        flex: 1;
        display: flex;
        align-items: center;
        height: 42px;
        border-radius: 21px;
        background: #214276;
        padding: 0 3px 0 18px;
      }
      .omnibox input {
        flex: 1;
        min-width: 0;
        margin-left: 15px;
        padding: 0;
        border: 0;
        outline: 0;
        height: 40px;
        font: inherit;
        font-size: 20px;
        color: transparent;
        background: linear-gradient(to right, #fff 151px, #a3b1ca 151px);
        background-clip: text;
        -webkit-background-clip: text;
      }
      .bookmarks {
        display: flex;
        align-items: center;
        gap: 25px;
        height: 48px;
        padding: 0 21px 6px;
      }
      .bookmarks a {
        display: flex;
        align-items: center;
        gap: 12px;
        white-space: nowrap;
      }
    `,
  ];

  render() {
    return html`
      <div class="strip">
        <div class="tabs">
          ${tabs.map(
            (t) => html`<div class=${classMap({ tab: true, active: !!t.active })}>
              ${t.icon}<button class="title">${t.title}</button>
              <button class="close" aria-label="Close tab">${closeIcon()}</button>
            </div>`
          )}
        </div>
        <button class="new" aria-label="New tab">${icon("0 0 18 18", svg`<path d="M9 0v18M0 9h18" stroke="#fff" stroke-width="2.400"/>`, 18)}</button>
        <div class="window">
          <button aria-label="Search tabs">${chevron("down", 17, 1)}</button>
          <button aria-label="Minimize">${icon("0 0 16 16", svg`<path d="M0 8h16" stroke="#fff" stroke-width="1.200"/>`, 15)}</button>
          <button aria-label="Restore">${icon("0 0 16 16", svg`<rect x=".7" y="3.200" width="12" height="12" rx="2" fill="none" stroke="#fff"/><path d="M4 .8h8q3.200 0 3.200 3v8" fill="none" stroke="#fff"/>`, 16)}</button>
          <button aria-label="Close">${closeIcon(17, 0.8)}</button>
        </div>
      </div>
      <div class="bar">
        <div class="group">
          <button class="tool" aria-label="Back">${back}</button>
          <button class="tool" aria-label="Forward">${forward}</button>
          <button class="tool" aria-label="Reload">${reload}</button>
          <button class="tool" aria-label="Home">${home}</button>
        </div>
        <div class="omnibox">
          ${lock}
          <input type="text" aria-label="Address" .value=${"moodle.iitb.ac.in/grade/report/user/index.php?id=5235"} />
          <button class="tool" aria-label="Share">${share}</button>
          <button class="tool" aria-label="Bookmark this page">${starOutline}</button>
        </div>
        <div class="group">
          <button class="tool" aria-label="Extensions">${puzzle}</button>
          <button class="tool" aria-label="Side panel">${sidePanel}</button>
          <button class="tool" aria-label="Profile">${profile(33)}</button>
          <button class="tool" aria-label="Menu">${dots}</button>
        </div>
      </div>
      <nav class="bookmarks">
        ${bookmarks.map((b) => html`<a href="#" aria-label=${b.name ?? b.label}>${b.icon}${b.label || nothing}</a>`)}
      </nav>
    `;
  }
}

@customElement("moodle-page")
class MoodlePage extends LitElement {
  static styles = [
    reset,
    css`
      :host {
        display: flex;
        overflow: hidden;
        background: #fff;
        color: #212529;
        font-size: 21px;
        line-height: 34px;
      }
      .frame {
        flex: 1;
        min-width: 0;
        display: flex;
        flex-direction: column;
      }
      .navbar {
        display: flex;
        align-items: center;
        height: 75px;
        flex: none;
        padding: 0 36px 0 25px;
        background: #fff;
        box-shadow: 0 3px 6px rgba(0, 0, 0, 0.1);
        z-index: 1;
      }
      .burger {
        width: 74px;
        height: 60px;
        background: #e9ecef;
      }
      .brand {
        margin-left: 30px;
        font-size: 27px;
        flex: 1;
      }
      .notify {
        display: flex;
        gap: 24px;
        margin-right: 36px;
      }
      .user {
        display: flex;
        align-items: center;
        gap: 8px;
        color: #2d6cc6;
      }
      .user span {
        padding-bottom: 4px;
      }
      .user svg:last-child {
        margin-left: 22px;
      }
      .body {
        flex: 1;
        min-height: 0;
        display: flex;
      }
      .drawer {
        width: 428px;
        flex: none;
        display: flex;
        background: #f1f1f1;
      }
      .list {
        flex: 1;
        min-width: 0;
        overflow: hidden;
        padding: 31px 31px 0 30px;
      }
      ul {
        list-style: none;
        margin: 0;
        padding: 0;
        border: 1px solid #dcdcdc;
        background: #fff;
      }
      li + li {
        border-top: 1px solid #dcdcdc;
      }
      li a {
        display: flex;
        gap: 12px;
        padding: 18px 42px 18px 31px;
        color: #495057;
      }
      .glyph {
        width: 24px;
        height: 34px;
        flex: none;
        display: flex;
        align-items: center;
      }
      .current {
        background: #2c6ec6;
        margin: 0 -1px;
      }
      .current a {
        color: #fff;
        font-weight: 700;
        padding-left: 32px;
      }
      main {
        flex: 1;
        min-width: 0;
        overflow: hidden;
        display: flex;
        flex-direction: column;
      }
      .card {
        flex: none;
        margin: 0 21px 24px 22px;
        padding: 0 32px 54px 31px;
        border: 1px solid #dcdcdc;
        border-top: 0;
      }
      .tabs {
        display: flex;
        height: 62px;
        margin: -35px 0 58px;
        padding-left: 5px;
      }
      .tabs a {
        padding: 15px 26px;
        border-bottom: 1px solid #dee2e6;
        color: #3b6fce;
      }
      .tabs .on {
        color: #495057;
        border: 1px solid #dee2e6;
        border-bottom: 0;
        padding: 15px 24px;
      }
      .rest {
        flex: 1;
        border-bottom: 1px solid #dee2e6;
      }
      table {
        width: 100%;
        table-layout: fixed;
        border-collapse: separate;
        border-spacing: 0;
      }
      th,
      td {
        padding: 18px;
        text-align: left;
        vertical-align: top;
        font-weight: 400;
        border-top: 1px solid #dee2e6;
      }
      thead th {
        font-weight: 700;
        vertical-align: bottom;
        border-bottom: 3px solid #dee2e6;
      }
      th.item {
        padding-left: 35px;
      }
      td.feedback {
        padding-right: 30px;
      }
      .rail,
      .category td,
      .category th,
      .total th,
      .total td {
        background: #e5e5e5;
      }
      .category th,
      .category .rail,
      .total th,
      .total td {
        border-top-color: #e5e5e5;
      }
      .category th {
        font-weight: 700;
        padding-left: 0;
      }
      .caption {
        display: flex;
        align-items: center;
        gap: 12px;
      }
      .shaded th,
      .shaded td {
        background: #ebebeb;
      }
      .item a {
        color: #3b6fce;
      }
      .item svg,
      .total svg {
        display: inline-block;
        vertical-align: -6px;
        margin-right: 6px;
      }
      .total .strong {
        font-weight: 700;
      }
      p {
        margin: 0 0 23px;
      }
      p:last-child {
        margin-bottom: 25px;
      }
      footer {
        flex: 1 0 auto;
        background: #373a41;
        color: #fff;
        padding: 24px 221px;
      }
    `,
  ];

  private row(r: GradeRow) {
    return html`<tr class=${classMap({ shaded: !!r.shaded })}>
      <th class="item" scope="row">${assignment} <a href="#">${r.item}</a></th>
      <td>${r.weight.map((w, i) => (i ? html`<br />${w}` : w))}</td>
      <td>${r.grade}</td>
      <td>${r.range}</td>
      <td>${r.percentage}</td>
      <td class="feedback">${r.feedback.map((f) => html`<p>${f}</p>`)}</td>
      <td>${r.contribution}</td>
    </tr>`;
  }

  render() {
    return html`
      <div class="frame">
        <header class="navbar">
          <button class="burger" aria-label="Side panel">${bars}</button>
          <a class="brand" href="#">IIT Bombay Moodle</a>
          <div class="notify">
            <button aria-label="Notifications">${bell}</button>
            <button aria-label="Messages">${comment}</button>
          </div>
          <a class="user" href="#"><span>Aakash Gore</span>${avatar}${caret}</a>
        </header>
        <div class="body">
          <aside class="drawer">
            <nav class="list">
              <ul>
                ${sections.map(
                  (s) => html`<li class=${classMap({ current: !!s.active })}>
                    <a href="#"><span class="glyph">${s.icon}</span><span>${s.label}</span></a>
                  </li>`
                )}
              </ul>
            </nav>
            <scroll-rail top .before=${0} .thumb=${408} .after=${757}></scroll-rail>
          </aside>
          <main>
            <section class="card">
              <nav class="tabs">
                <a href="#">Overview report</a>
                <a class="on" href="#">User report</a>
                <span class="rest"></span>
              </nav>
              <table>
                <colgroup>
                  <col width="36" />
                  <col width="194" />
                  <col width="193" />
                  <col width="102" />
                  <col width="102" />
                  <col width="154" />
                  <col />
                  <col width="268" />
                </colgroup>
                <thead>
                  <tr>
                    <th colspan="2" scope="col">Grade item</th>
                    <th scope="col">Calculated<br />weight</th>
                    <th scope="col">Grade</th>
                    <th scope="col">Range</th>
                    <th scope="col">Percentage</th>
                    <th scope="col">Feedback</th>
                    <th scope="col">Contribution to course total</th>
                  </tr>
                </thead>
                <tbody>
                  <tr class="category">
                    <td class="rail" rowspan="5"></td>
                    <th colspan="7" scope="colgroup"><span class="caption">${folderSolid}Computer Networks Minor</span></th>
                  </tr>
                  ${grades.map((r) => this.row(r))}
                  <tr class="total">
                    <th class="item strong" scope="row">${sigma} Course total</th>
                    <td>-</td>
                    <td class="strong">92.00</td>
                    <td class="strong">0–125</td>
                    <td class="strong">73.60 %</td>
                    <td></td>
                    <td>-</td>
                  </tr>
                </tbody>
              </table>
            </section>
            <footer>You are logged in as <a href="#">Aakash Gore</a> (<a href="#">Log out</a>)</footer>
          </main>
        </div>
      </div>
      <scroll-rail .before=${267} .thumb=${900} .after=${73}></scroll-rail>
    `;
  }
}

@customElement("download-shelf")
class DownloadShelf extends LitElement {
  static styles = [
    reset,
    css`
      :host {
        display: flex;
        align-items: center;
        height: 84px;
        flex: none;
        padding: 0 19px 0 5px;
        background: #265299;
        border-top: 1px solid #4a76b8;
        box-sizing: border-box;
        color: #fff;
        font-size: 17px;
      }
      .item {
        display: flex;
        align-items: center;
        gap: 20px;
        width: 350px;
        height: 66px;
        padding: 0 29px 0 25px;
        border-right: 1px solid #5b7fb8;
      }
      .file {
        flex: 1;
        justify-content: flex-start;
        white-space: nowrap;
        gap: 20px;
        font-size: 18px;
      }
      .all {
        margin-left: auto;
        width: 118px;
        height: 48px;
        border: 1px solid #3c4658;
        border-radius: 6px;
        color: #a9c6fa;
      }
      .x {
        margin-left: 20px;
      }
    `,
  ];

  render() {
    return html`
      ${downloads.map(
        (d) => html`<div class="item">
          <button class="file">${d.icon}${d.name}</button>
          <button aria-label="Options">${chevron("up", 14, 2.4)}</button>
        </div>`
      )}
      <button class="all">Show all</button>
      <button class="x" aria-label="Close shelf">${closeIcon(14)}</button>
    `;
  }
}

@customElement("task-bar")
class TaskBar extends LitElement {
  static styles = [
    reset,
    css`
      :host {
        display: grid;
        grid-template-columns: 1fr auto 1fr;
        align-items: center;
        height: 72px;
        flex: none;
        color: #fff;
        font-size: 17px;
        line-height: 24px;
        background: radial-gradient(ellipse 180px 90px at 42% 50%, #331a20, transparent),
          radial-gradient(ellipse 160px 90px at 27% 90%, #301b2c, transparent),
          linear-gradient(to right, #202124 84%, #2e1c24 92%);
      }
      .weather {
        justify-content: flex-start;
        padding-left: 29px;
        gap: 10px;
        text-align: left;
      }
      .muted {
        color: #cfcfcf;
      }
      .apps {
        display: flex;
        gap: 6px;
      }
      .app {
        position: relative;
        width: 60px;
        height: 60px;
        border-radius: 6px;
      }
      .here {
        background: #2f2f34;
        border: 1px solid #3c3c41;
      }
      .mark {
        position: absolute;
        bottom: 1px;
        width: 9px;
        height: 5px;
        border-radius: 3px;
        background: #9a9a9c;
      }
      .here .mark {
        width: 24px;
        background: #f58066;
      }
      .badge {
        position: absolute;
        top: 4px;
        right: 3px;
      }
      .tray {
        display: flex;
        align-items: center;
        justify-content: flex-end;
        padding-right: 26px;
      }
      .lang {
        margin: 0 27px 0 18px;
        text-align: center;
      }
      .sys {
        gap: 10px;
        margin-right: 22px;
      }
      .cloud {
        margin-left: 13px;
      }
      .clock {
        text-align: right;
        display: block;
      }
      .count {
        margin-left: 9px;
        width: 30px;
        height: 30px;
        border-radius: 50%;
        background: #f58066;
        color: #1d1d1f;
      }
    `,
  ];

  render() {
    return html`
      <button class="weather">
        ${umbrella}<span>26°C<br /><span class="muted">Rain coming</span></span>
      </button>
      <div class="apps">
        ${apps.map(
          (a) => html`<button class=${classMap({ app: true, here: !!a.current })} aria-label=${a.name}>
            ${a.icon}${a.current ? html`<span class="badge">${profile(24)}</span>` : nothing}
            ${a.running || a.current ? html`<span class="mark"></span>` : nothing}
          </button>`
        )}
      </div>
      <div class="tray">
        <button aria-label="Hidden icons">${chevron("up", 18, 1.3)}</button>
        <button class="cloud" aria-label="OneDrive">${cloudError}</button>
        <button class="lang">ENG<br />IN</button>
        <button class="sys" aria-label="Network, sound, battery">${wifi}${muted}${battery}</button>
        <button class="clock">22:47<br />07-10-2022</button>
        <button class="count">11</button>
      </div>
    `;
  }
}

@customElement("app-root")
class AppRoot extends LitElement {
  static styles = css`
    :host {
      display: flex;
      flex-direction: column;
      height: 100vh;
      overflow: hidden;
      font-family: "Open Sans", "Noto Sans", sans-serif;
    }
    moodle-page {
      flex: 1;
      min-height: 0;
    }
  `;

  render() {
    return html`<browser-chrome></browser-chrome><moodle-page></moodle-page><download-shelf></download-shelf><task-bar></task-bar>`;
  }
}
